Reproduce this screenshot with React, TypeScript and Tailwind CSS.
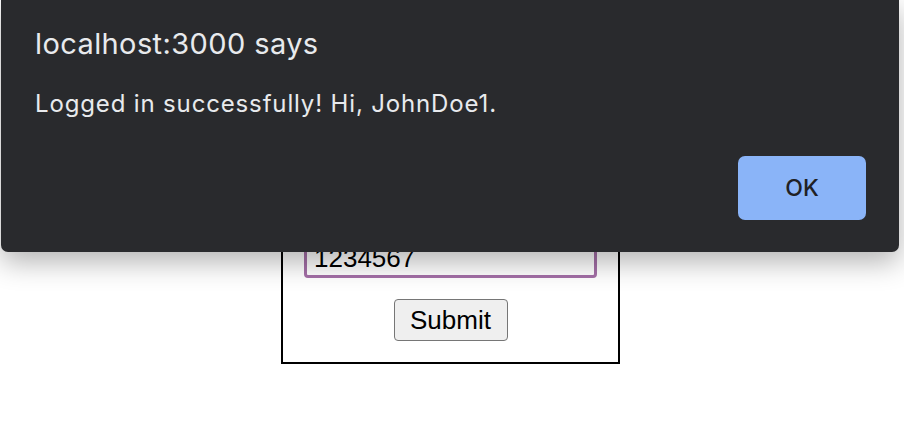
import React from "react";

export default function App() {
  return (
    <div className="relative w-[904px] h-[426px] overflow-hidden bg-white">
      <div className="pt-[100px] pl-[281px]">
        <form className="w-[339px] border-2 border-black px-[20px] pt-[16px] pb-[21px] flex flex-col items-center font-['Liberation_Sans',Arial,sans-serif] text-black">
          <label className="self-start text-[26px] leading-[30px] mb-[6px]">Username</label>
          <input
            readOnly
            value="JohnDoe1"
            className="w-[294px] h-[40px] border-2 border-[#767676] rounded-[3px] px-[8px] text-[26px] mb-[8px]"
          />
          <label className="self-start text-[26px] leading-[30px] mb-[6px]">Password</label>
          <input
            readOnly
            value="1234567"
            className="w-[293px] h-[40px] border-[3px] border-[#a46fa7] rounded-[4px] px-[7px] text-[26px] leading-none outline-none"
          />
          <button
            type="button"
            className="mt-[21px] w-[114px] h-[42px] bg-[#efefef] border border-[#767676] rounded-[4px] text-[26px] leading-none"
          >
            Submit
          </button>
        </form>
      </div>

      <div className="absolute top-0 left-[1px] w-[898px] h-[252px] bg-[#292a2d] rounded-b-[7px] shadow-[0_10px_28px_rgba(0,0,0,0.3)] font-['Inter',sans-serif]">
        <div className="flex flex-col h-full px-[34px]">
          <div className="pt-[26px] text-[29px] leading-[36px] tracking-[0.4px] text-[#e8eaed]">localhost:3000 says</div>
          <div className="mt-[28px] text-[24px] leading-[28px] tracking-[0.85px] text-[#e8eaed]">Logged in successfully! Hi, JohnDoe1.</div>
          <div className="flex justify-end mt-auto pb-[32px]">
            <button
              type="button"
              className="w-[128px] h-[64px] rounded-[7px] bg-[#8ab4f8] text-[#202124] text-[23px] font-medium mr-[-1px]"
            >
              OK
            </button>
          </div>
        </div>
      </div>
    </div>
  );
}
